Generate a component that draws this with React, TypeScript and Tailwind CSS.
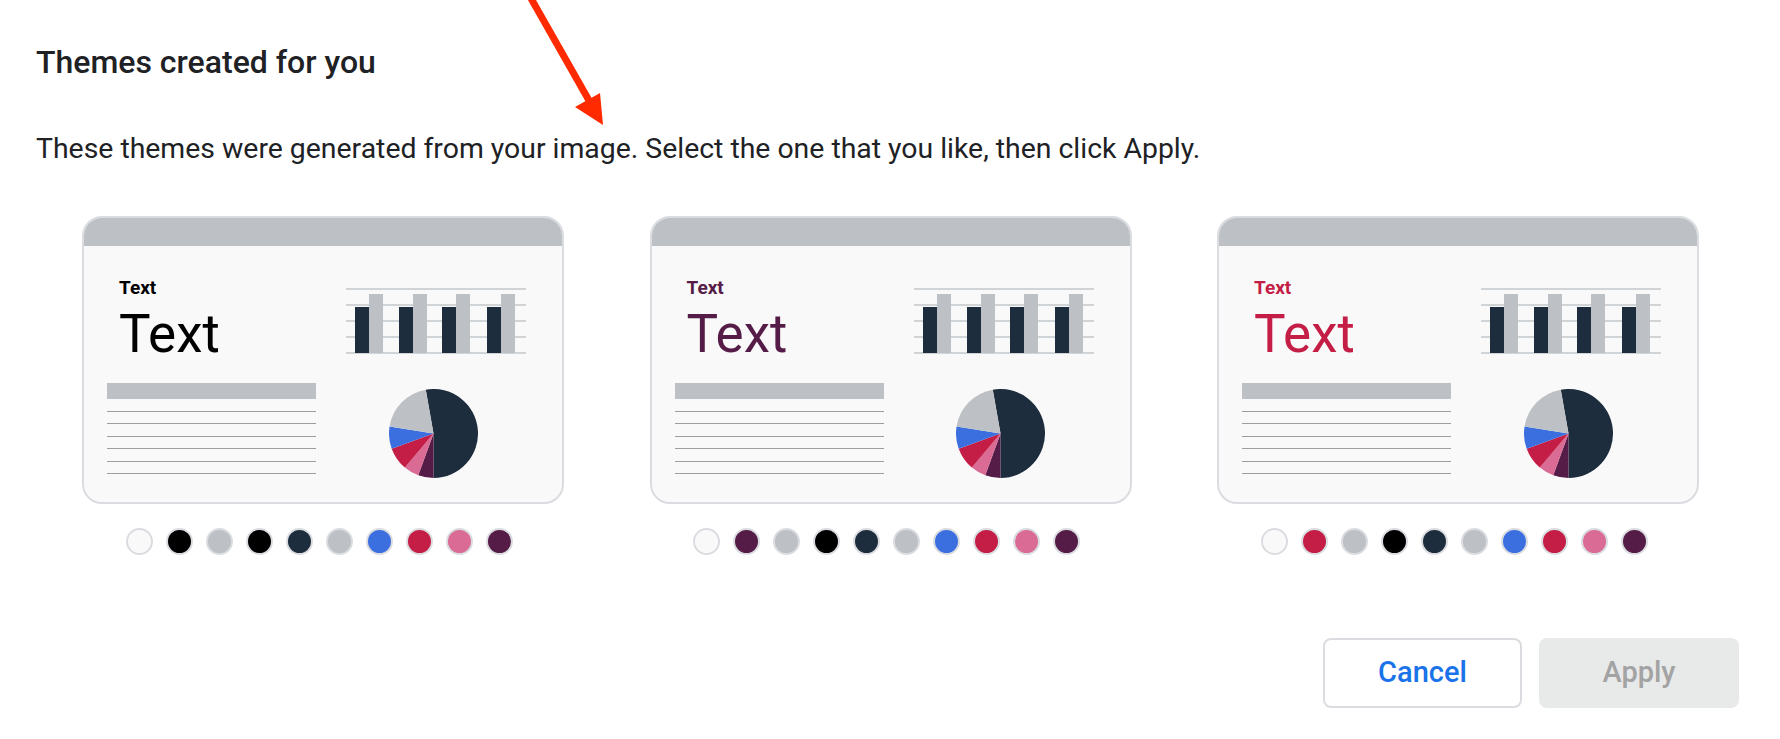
import React from 'react'

const NAVY = '#1e2d3d'
const GRAY = '#bdc1c6'
const BLUE = '#3b6fe0'
const RED = '#c41e46'
const PINK = '#d96b94'
const PLUM = '#561c48'

const themes = [
    { accent: '#000000' },
    { accent: PLUM },
    { accent: RED },
]

// slices: clockwise degrees from 12 o'clock
const slices = [
    { from: -10, to: 180, color: NAVY },
    { from: 180, to: 200, color: PLUM },
    { from: 200, to: 220, color: PINK },
    { from: 220, to: 250, color: RED },
    { from: 250, to: 279, color: BLUE },
    { from: 279, to: 350, color: GRAY },
]

function point(cx: number, cy: number, r: number, deg: number) {
    const a = (deg * Math.PI) / 180
    return [cx + r * Math.sin(a), cy - r * Math.cos(a)]
}

function slicePath(from: number, to: number) {
    const c = 44.5
    const r = 44.5
    const [x1, y1] = point(c, c, r, from)
    const [x2, y2] = point(c, c, r, to)
    const large = to - from > 180 ? 1 : 0
    return `M${c} ${c} L${x1} ${y1} A${r} ${r} 0 ${large} 1 ${x2} ${y2} Z`
}

function PieChart() {
    return (
        <svg width="89" height="89" viewBox="0 0 89 89" className="block">
            {slices.map((s, i) => (
                <path key={i} d={slicePath(s.from, s.to)} fill={s.color} />
            ))}
        </svg>
    )
}

function BarChart() {
    const groups = [9, 53, 96, 141]
    return (
        <svg width="180" height="66" viewBox="0 0 180 66" className="block">
            {[1, 17, 33, 49, 65].map((y) => (
                <rect key={y} x="0" y={y - 0.75} width="180" height="1.5" fill="#c4c7ca" />
            ))}
            {groups.map((x) => (
                <g key={x}>
                    <rect x={x} y="19" width="14" height="46" fill={NAVY} />
                    <rect x={x + 14} y="6" width="14" height="59" fill={GRAY} />
                </g>
            ))}
        </svg>
    )
}

function ThemeCard({ accent }: { accent: string }) {
    const swatches = ['#f9f9f9', accent, GRAY, '#000000', NAVY, GRAY, BLUE, RED, PINK, PLUM]
    return (
        <div className="flex flex-col">
            <div className="w-[482px] h-[288px] rounded-[20px] border-2 border-[#dadce0] bg-[#f9f9f9] overflow-hidden">
                <div className="h-[28px] bg-[#bdc1c6]" />
                <div className="flex pl-[23px] pt-[31px]">
                    <div className="w-[209px] flex flex-col">
                        <div className="pl-[12px] text-[19px] leading-[22px] font-bold" style={{ color: accent }}>
                            Text
                        </div>
                        <div className="pl-[12px] mt-[9px] text-[53px] leading-[53px]" style={{ color: accent }}>
                            Text
                        </div>
                        <div className="mt-[22px] h-[16px] bg-[#bdc1c6]" />
                        <div className="mt-[11.5px] flex flex-col gap-[11.6px]">
                            {[0, 1, 2, 3, 4, 5].map((i) => (
                                <div key={i} className="h-px bg-[#9e9e9e]" />
                            ))}
                        </div>
                    </div>
                    <div className="ml-[30px] w-[180px] flex flex-col">
                        <div className="mt-[11px]">
                            <BarChart />
                        </div>
                        <div className="mt-[34.5px] pl-[42.5px]">
                            <PieChart />
                        </div>
                    </div>
                </div>
            </div>
            <div className="mt-[24px] flex justify-center gap-[13px] pr-[8px]">
                {swatches.map((c, i) => (
                    <div
                        key={i}
                        className="w-[27px] h-[27px] rounded-full border-2 border-[#dadce0]"
                        style={{ backgroundColor: c }}
                    />
                ))}
            </div>
        </div>
    )
}

export default function App() {
    return (
        <div
            className="relative w-[1780px] h-[739px] overflow-hidden bg-white"
            style={{ fontFamily: 'Roboto, "Noto Sans", Arial, sans-serif' }}
        >
            <div className="pl-[36px] pt-[42px]">
                <h1 className="text-[32px] leading-[40px] font-medium text-[#202124]">Themes created for you</h1>
                <p className="mt-[51px] text-[28.4px] leading-[32px] text-[#202124]">
                    These themes were generated from your image. Select the one that you like, then click Apply.
                </p>
            </div>

            <div className="ml-[82px] mt-[51px] w-[1617px] flex justify-between">
                {themes.map((t, i) => (
                    <ThemeCard key={i} accent={t.accent} />
                ))}
            </div>

            <div className="mt-[83px] pr-[41px] flex justify-end gap-[17px]">
                <button className="w-[199px] h-[70px] rounded-[8px] border-2 border-[#dadce0] bg-white text-[29px] font-medium text-[#1a73e8]">
                    Cancel
                </button>
                <button className="w-[200px] h-[70px] rounded-[8px] bg-[#e8e9e9] text-[29px] font-medium text-[#a3a3a3]">
                    Apply
                </button>
            </div>

            {/* red annotation arrow */}
            <svg className="absolute left-0 top-0 pointer-events-none" width="700" height="170" viewBox="0 0 700 170">
                <line x1="524" y1="-14" x2="591" y2="104" stroke="#ff2a00" strokeWidth="7" />
                <polygon points="603,125 575,107 600,93" fill="#ff2a00" />
            </svg>
        </div>
    )
}
